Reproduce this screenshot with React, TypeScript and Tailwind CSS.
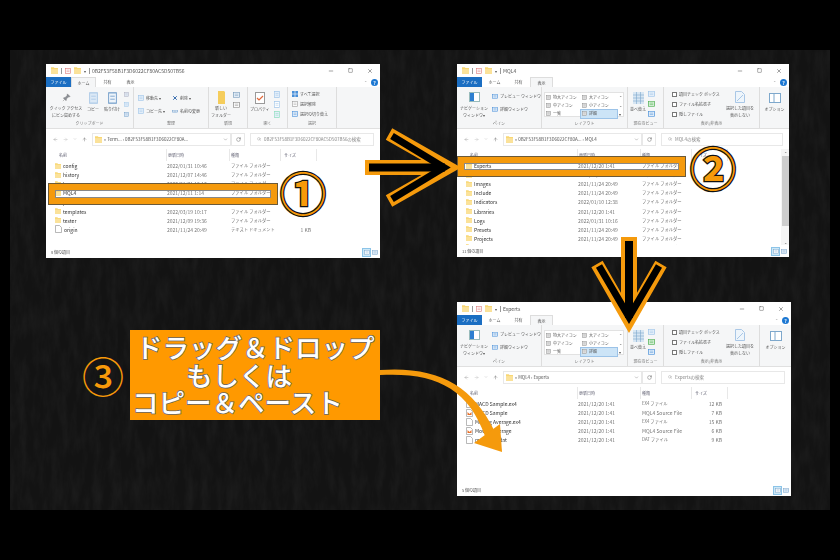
import React from "react";
import { Minus, Square, X, ArrowLeft, ArrowRight, ArrowUp, ChevronDown, RotateCw, Search } from "lucide-react";

const Folder = ({ s = 6 }: { s?: number }) => (
  <svg width={s} height={s} viewBox="0 0 10 10" className="shrink-0">
    <path d="M0 .5h4l1 1h5v8H0z" fill="#f8d775" />
    <path d="M0 3h10v6.500H0z" fill="#fbe29a" />
  </svg>
);
const Doc = ({ mq }: { mq?: boolean }) => (
  <svg width="7" height="8" viewBox="0 0 7 8" className="shrink-0">
    <path d="M.5.5h4l2 2v5h-6z" fill="#fff" stroke="#8a8a8a" strokeWidth=".6" />
    {mq && <path d="M1.500 3l2 2 2-2v3h-4z" fill="#e8702a" />}
  </svg>
);
const Box = ({ w = 7, h = 7, c = "#9cc3e8", f = "#e6f0fa" }: { w?: number; h?: number; c?: string; f?: string }) => (
  <svg width={w} height={h} viewBox="0 0 10 10" preserveAspectRatio="none" className="shrink-0">
    <rect x=".7" y=".7" width="8.6" height="8.6" fill={f} stroke={c} strokeWidth="1" />
    <path d="M2.500 3.500h5M2.500 6h5" stroke={c} strokeWidth=".8" />
  </svg>
);
const Chk = () => <span className="w-[5px] h-[5px] border-[0.5px] border-[#777] bg-white shrink-0" />;

const Big = ({ children, a, b, w }: { children: React.ReactNode; a: string; b?: string; w: string }) => (
  <div className={`flex flex-col items-center shrink-0 ${w}`}>
    <div className="h-[15px] flex items-center justify-center">{children}</div>
    <span className="leading-[7px] mt-[1px] whitespace-nowrap">{a}</span>
    {b && <span className="leading-[7px] whitespace-nowrap">{b}</span>}
  </div>
);
const Group = ({ label, w, children }: { label: string; w: string; children: React.ReactNode }) => (
  <div className={`flex flex-col h-full border-r-[0.5px] border-[#dddddd] shrink-0 ${w}`}>
    <div className="flex-1 flex pt-[3px] min-h-0">{children}</div>
    <div className="h-[9px] leading-[9px] text-center text-[#777]">{label}</div>
  </div>
);
const Sm = ({ children, t }: { children?: React.ReactNode; t?: string }) => (
  <div className="flex items-center gap-[2px] h-[10px] whitespace-nowrap">{children}{t && <span>{t}</span>}</div>
);

const HomeRibbon = () => (
  <>
    <Group label="クリップボード" w="w-[88px]">
      <Big w="w-[40px]" a="クイック アクセス" b="にピン留めする">
        <svg width="9" height="9" viewBox="0 0 10 10"><path d="M6 1l3 3-2 .5-2 2 -.5 2-3-3 2-.5 2-2zM3 7L1 9" fill="#8b8f96" stroke="#777" strokeWidth=".5" /></svg>
      </Big>
      <Big w="w-[14px]" a="コピー"><Box w={9} h={12} c="#a9c7e6" f="#dce9f6" /></Big>
      <Big w="w-[24px]" a="貼り付け"><Box w={9} h={12} c="#6f9bc8" f="#eef4fa" /></Big>
      <div className="flex flex-col -mt-[1px]">
        <Sm><Box w={5} h={5} c="#aab" /></Sm>
        <Sm><Box w={5} h={5} /></Sm>
        <Sm><Box w={5} h={5} c="#6f9bc8" /></Sm>
      </div>
    </Group>
    <Group label="整理" w="w-[75px]">
      <div className="grid grid-cols-[34px_1fr] pl-[4px] pt-[3px] auto-rows-[13px]">
        <Sm t="移動先 ▾"><Box w={6} h={6} /></Sm>
        <Sm t="削除 ▾"><X size={6} color="#3b6fb0" strokeWidth={4} /></Sm>
        <Sm t="コピー先 ▾"><Box w={6} h={6} /></Sm>
        <Sm t="名前の変更"><Box w={6} h={3} c="#6f9bc8" /></Sm>
      </div>
    </Group>
    <Group label="新規" w="w-[39px]">
      <Big w="w-[24px]" a="新しい" b="フォルダー">
        <svg width="7" height="13" viewBox="0 0 7 13"><path d="M0 0h6l1 1v12H0z" fill="#f5cd5c" /></svg>
      </Big>
      <div className="flex flex-col">
        <Sm><Box w={7} h={6} c="#7a9cbc" /></Sm>
        <Sm><Box w={7} h={6} c="#8a8a8a" f="#fff" /></Sm>
      </div>
    </Group>
    <Group label="開く" w="w-[40px]">
      <Big w="w-[24px]" a="プロパティ">
        <svg width="10" height="12" viewBox="0 0 10 12"><rect x=".5" y=".5" width="9" height="11" fill="#fff" stroke="#9a9a9a" /><path d="M2 6l2 2 4-4" fill="none" stroke="#e2683a" strokeWidth="1.2" /></svg>
      </Big>
      <div className="flex flex-col -mt-[1px] pl-[2px]">
        <Sm><Box w={6} h={7} /></Sm>
        <Sm><Box w={6} h={7} c="#9cc3e8" f="#fff" /></Sm>
        <Sm><Box w={6} h={7} c="#8db" /></Sm>
      </div>
    </Group>
    <Group label="選択" w="w-[49px]">
      <div className="flex flex-col pl-[4px] -mt-[1px]">
        <Sm t="すべて選択">
          <svg width="6" height="6" viewBox="0 0 6 6"><path d="M0 0h6v6H0z" fill="#4a90d9" /><path d="M3 0v6M0 3h6" stroke="#fff" strokeWidth=".6" /></svg>
        </Sm>
        <Sm t="選択解除"><Box w={6} h={6} c="#999" f="#fff" /></Sm>
        <Sm t="選択の切り替え"><Box w={6} h={6} c="#4a90d9" /></Sm>
      </div>
    </Group>
  </>
);

const Cell = ({ t, sel }: { t: string; sel?: boolean }) => (
  <div className={`flex items-center gap-[2px] h-[8.300px] whitespace-nowrap pl-[1px] ${sel ? "bg-[#cce4f7] outline-[0.5px] outline-[#9cc3e8]" : ""}`}>
    <Box w={5} h={5} c="#8a8a8a" f="#eee" />
    <span>{t}</span>
  </div>
);

const ViewRibbon = () => (
  <>
    <Group label="ペイン" w="w-[85px]">
      <Big w="w-[34px]" a="ナビゲーション" b="ウィンドウ▾">
        <svg width="11" height="10" viewBox="0 0 11 10"><rect x=".5" y=".5" width="10" height="9" fill="#fff" stroke="#9bb" /><rect x="1" y="1" width="4" height="8" fill="#2e7fd0" /></svg>
      </Big>
      <div className="flex flex-col gap-[3px] pt-[1px] pl-[1px]">
        <Sm t="プレビュー ウィンドウ"><Box w={6} h={5} c="#4a90d9" /></Sm>
        <Sm t="詳細ウィンドウ"><Box w={6} h={5} c="#4a90d9" /></Sm>
      </div>
    </Group>
    <Group label="レイアウト" w="w-[86px]">
      <div className="w-[80px] h-[25px] mt-[2px] ml-[2px] bg-white border-[0.5px] border-[#e2e2e2] grid grid-cols-[36px_36px_1fr] relative">
        <Cell t="特大アイコン" />
        <Cell t="大アイコン" />
        <span className="text-center leading-[8px]">⌃</span>
        <Cell t="中アイコン" />
        <Cell t="小アイコン" />
        <span className="text-center leading-[8px]">⌄</span>
        <Cell t="一覧" />
        <Cell t="詳細" sel />
        <span className="text-center leading-[8px]">▾</span>
      </div>
    </Group>
    <Group label="現在のビュー" w="w-[36px]">
      <Big w="w-[20px]" a="並べ替え">
        <svg width="11" height="12" viewBox="0 0 11 12"><rect width="11" height="12" fill="#d7e6f3" /><path d="M0 3h11M0 6h11M0 9h11M3.500 0v12M7.500 0v12" stroke="#7ea8cc" strokeWidth=".6" /></svg>
      </Big>
      <div className="flex flex-col -mt-[1px]">
        <Sm><Box w={7} h={6} /></Sm>
        <Sm><Box w={7} h={6} c="#4caf50" f="#d8f0d8" /></Sm>
        <Sm><Box w={7} h={6} c="#4a90d9" /></Sm>
      </div>
    </Group>
    <Group label="表示/非表示" w="w-[96px]">
      <div className="flex flex-col pl-[8px] -mt-[1px] w-[60px]">
        <Sm t="項目チェック ボックス"><Chk /></Sm>
        <Sm t="ファイル名拡張子"><Chk /></Sm>
        <Sm t="隠しファイル"><Chk /></Sm>
      </div>
      <Big w="w-[32px]" a="選択した項目を" b="表示しない">
        <svg width="10" height="12" viewBox="0 0 10 12"><path d="M.5.5h6l3 3v8h-9z" fill="#eef5fb" stroke="#a9c7e6" /><path d="M2 10l6-6" stroke="#a9c7e6" /></svg>
      </Big>
    </Group>
    <div className="flex-1 flex justify-center pt-[3px]">
      <Big w="w-[26px]" a="オプション">
        <svg width="12" height="10" viewBox="0 0 12 10"><rect x=".5" y=".5" width="11" height="9" fill="#fff" stroke="#7ea8cc" /><path d="M5 1v8" stroke="#7ea8cc" /></svg>
      </Big>
    </div>
  </>
);

type Row = { n: string; d: string; t: string; s?: string; i?: "folder" | "doc" | "mq" };

const Win = ({
  pos, title, active, ribbon, crumbs, search, rows, status, scroll,
}: {
  pos: string; title: string; active: number; ribbon: React.ReactNode; crumbs: string; search: string; rows: Row[]; status: string; scroll?: boolean;
}) => (
  <div className={`absolute flex flex-col overflow-hidden bg-white text-[#555] text-[4px] blur-[0.5px] ${pos}`}>
    <div className="h-[13px] shrink-0 flex items-center pl-[5px] gap-[3px] text-[5px]">
      <Folder s={7} />
      <span className="w-[0.5px] h-[6px] bg-[#999]" />
      <Box w={6} h={6} c="#d77" f="#fff" />
      <Folder s={7} />
      <span className="text-[4px]">▾</span>
      <span className="w-[0.5px] h-[6px] bg-[#999]" />
      <span className="whitespace-nowrap">{title}</span>
      <div className="ml-auto flex items-center gap-[14px] pr-[7px] text-[#444]">
        <Minus size={6} /><Square size={5} /><X size={6} />
      </div>
    </div>
    <div className="h-[10px] shrink-0 flex items-stretch text-center leading-[10px]">
      <span className="w-[25px] bg-[#1b6ec2] text-white">ファイル</span>
      {["ホーム", "共有", "表示"].map((t, i) => (
        <span key={t} className={`${i === 0 ? "w-[25px]" : "w-[23px]"} ${active === i ? "bg-[#f5f6f7] border-x-[0.5px] border-t-[0.5px] border-[#ddd]" : ""}`}>{t}</span>
      ))}
      <span className="ml-auto mr-[2px] self-center flex items-center gap-[4px]">
        <span className="text-[#999]">⌃</span>
        <span className="w-[7px] h-[7px] rounded-full bg-[#1b77d2] text-white text-[5px] leading-[7px] font-bold">?</span>
      </span>
    </div>
    <div className="h-[42px] shrink-0 flex bg-[#f5f6f7] border-b-[0.5px] border-[#e0e0e0] leading-[7px]">{ribbon}</div>
    <div className="h-[20px] shrink-0 flex items-center gap-[5px] pl-[7px] pr-[6px] text-[4.500px]">
      <ArrowLeft size={5} color="#999" />
      <ArrowRight size={5} color="#bbb" />
      <ChevronDown size={4} color="#aaa" />
      <ArrowUp size={5} color="#666" />
      <div className="flex items-center shrink-0">
        <div className="w-[139px] h-[13px] flex items-center gap-[2px] border-[0.5px] border-[#e8e8e8] px-[2px] overflow-hidden">
          <Folder s={7} />
          <span className="whitespace-nowrap flex-1">{crumbs}</span>
          <ChevronDown size={5} color="#777" />
        </div>
        <div className="w-[14px] h-[13px] flex items-center justify-center border-[0.5px] border-[#e8e8e8]"><RotateCw size={5} /></div>
      </div>
      <div className="flex-1 min-w-0 h-[13px] flex items-center gap-[3px] border-[0.5px] border-[#e8e8e8] pl-[6px] text-[#888] whitespace-nowrap overflow-hidden">
        <Search size={4} className="shrink-0" />{search}
      </div>
    </div>
    <div className="flex-1 min-h-0 relative overflow-hidden">
      <div className="h-[12px] grid grid-cols-[121px_63px_51px_36px] items-center text-[#667]">
        <span className="pl-[13px] border-r-[0.5px] border-[#e8e8e8] h-full leading-[12px]">名前</span>
        <span className="pl-[1px] border-r-[0.5px] border-[#e8e8e8] h-full leading-[12px]">更新日時</span>
        <span className="pl-[1px] border-r-[0.5px] border-[#e8e8e8] h-full leading-[12px]">種類</span>
        <span className="border-r-[0.5px] border-[#e8e8e8] h-full leading-[12px] pl-[3px]">サイズ</span>
      </div>
      {rows.map((r) => (
        <div key={r.n} className="h-[9.100px] grid grid-cols-[121px_63px_51px_36px] items-center leading-[9px] whitespace-nowrap">
          <div className="pl-[9px] flex items-center gap-[2px] text-[#333] text-[5px]">
            {r.i === "doc" ? <Doc /> : r.i === "mq" ? <Doc mq /> : <Folder />}
            <span>{r.n}</span>
          </div>
          <span className="text-[#777] text-[5px]">{r.d}</span>
          <span className={`text-[#777] pl-[1px] ${r.t.startsWith("MQL4") ? "text-[5px]" : "text-[4.300px]"}`}>{r.t}</span>
          <span className="text-right text-[#777] pr-[6px] text-[5px]">{r.s}</span>
        </div>
      ))}
      {scroll && (
        <div className="absolute right-0 top-0 bottom-0 w-[8px] bg-[#f5f5f5] flex flex-col items-center">
          <span className="leading-[6px] mt-[1px]">⌃</span>
          <div className="w-[7px] h-[70px] bg-[#cdcdcd]" />
          <span className="leading-[6px] mt-auto">⌄</span>
        </div>
      )}
    </div>
    <div className="h-[12px] shrink-0 flex items-center pl-[5px]">
      <span>{status}</span>
      <div className="ml-auto mr-[2px] flex items-center gap-[1px]">
        <span className="w-[9px] h-[9px] bg-[#cce8f7] border-[0.5px] border-[#8cc4e8] flex items-center justify-center"><Box w={6} h={5} c="#7ea8cc" f="#fff" /></span>
        <Box w={6} h={5} c="#7ea8cc" />
      </div>
    </div>
  </div>
);

const ff = "ファイル フォルダー";
const rows1: Row[] = [
  { n: "config", d: "2022/01/31 10:46", t: ff },
  { n: "history", d: "2021/12/07 14:46", t: ff },
  { n: "logs", d: "2022/01/31 10:16", t: ff },
  { n: "MQL4", d: "2021/12/11 1:14", t: ff },
  { n: "profiles", d: "2022/01/31 10:17", t: ff },
  { n: "templates", d: "2022/03/19 10:17", t: ff },
  { n: "tester", d: "2021/12/09 19:36", t: ff },
  { n: "origin", d: "2021/11/24 20:49", t: "テキスト ドキュメント", s: "1 KB", i: "doc" },
];
const rows2: Row[] = [
  { n: "Experts", d: "2021/12/20 1:41", t: ff },
  { n: "Files", d: "2021/11/24 20:49", t: ff },
  { n: "Images", d: "2021/11/24 20:49", t: ff },
  { n: "Include", d: "2021/11/24 20:49", t: ff },
  { n: "Indicators", d: "2022/01/10 12:38", t: ff },
  { n: "Libraries", d: "2021/12/20 1:41", t: ff },
  { n: "Logs", d: "2022/01/31 10:16", t: ff },
  { n: "Presets", d: "2021/11/24 20:49", t: ff },
  { n: "Projects", d: "2021/11/24 20:49", t: ff },
  { n: "Scripts", d: "2021/11/24 20:49", t: ff },
];
const rows3: Row[] = [
  { n: "MACD Sample.ex4", d: "2021/12/20 1:41", t: "EX4 ファイル", s: "12 KB", i: "doc" },
  { n: "MACD Sample", d: "2021/12/20 1:41", t: "MQL4 Source File", s: "7 KB", i: "mq" },
  { n: "Moving Average.ex4", d: "2021/12/20 1:41", t: "EX4 ファイル", s: "15 KB", i: "doc" },
  { n: "Moving Average", d: "2021/12/20 1:41", t: "MQL4 Source File", s: "6 KB", i: "mq" },
  { n: "mqlcache.dat", d: "2021/12/20 1:41", t: "DAT ファイル", s: "9 KB", i: "doc" },
];

const Highlight = ({ pos }: { pos: string }) => (
  <div className={`absolute border-[6px] border-[#f59a0c] outline-[0.5px] outline-[#6b5a3a] ${pos}`}>
    <div className="w-full h-full border-[0.5px] border-[#888] blur-[0.3px]" />
  </div>
);

const Num = ({ pos, t }: { pos: string; t: string }) => (
  <span className={`absolute text-[#f79a0a] font-bold text-[46px] leading-[50px] w-[50px] h-[50px] text-center [-webkit-text-stroke:2.500px_#111] [paint-order:stroke_fill] ${pos}`}>{t}</span>
);

const Art = () => (
  <svg className="absolute left-0 top-0 pointer-events-none" width="840" height="560" viewBox="0 0 840 560" fill="none">
    <g strokeLinejoin="miter" strokeLinecap="butt">
      <path d="M365 167.500H445" stroke="#f59a0c" strokeWidth="15" />
      <path d="M389 134L448 167.500L389 201" stroke="#f59a0c" strokeWidth="13" />
      <path d="M369 167.500H445" stroke="#000" strokeWidth="8" />
      <path d="M392 136L444 167.500L392 199" stroke="#000" strokeWidth="7" />
      <path d="M629 237V318" stroke="#f59a0c" strokeWidth="16" />
      <path d="M597 264L629 320L661 264" stroke="#f59a0c" strokeWidth="13" />
      <path d="M629 241V318" stroke="#000" strokeWidth="8" />
      <path d="M599 266L629 317L659 266" stroke="#000" strokeWidth="7" />
    </g>
    <path d="M380 370C437 366 472 385 494 430L485 436C468 388 435 372 380 375Z" fill="#f59a0c" />
    <path d="M502 452L474 443L500 424Z" fill="#f59a0c" />
  </svg>
);

export default function App() {
  return (
    <div className="relative w-[840px] h-[560px] bg-black overflow-hidden flex items-center justify-center [font-family:'Noto_Sans_CJK_JP','Noto_Sans',sans-serif]">
      <div className="w-[820px] h-[460px] bg-[#131313] overflow-hidden">
        <svg width="820" height="460" className="block opacity-15">
          <filter id="chalk">
            <feTurbulence type="fractalNoise" baseFrequency="0.12 0.035" numOctaves="4" seed="4" />
            <feColorMatrix values="0 0 0 0 .25  0 0 0 0 .25  0 0 0 0 .25  0 0 0 .9 -.3" />
          </filter>
          <rect width="820" height="460" filter="url(#chalk)" />
        </svg>
      </div>

      <Win
        pos="left-[46px] top-[64px] w-[334px] h-[194px]"
        title="0B2F53F58B1F3D6022CF80AC5D507B56"
        active={0}
        ribbon={<HomeRibbon />}
        crumbs="« Term... › 0B2F53F58B1F3D6022CF80A..."
        search="0B2F53F58B1F3D6022CF80AC5D507B56の検索"
        rows={rows1}
        status="8 個の項目"
      />
      <Win
        pos="left-[457px] top-[64px] w-[332px] h-[193px]"
        title="MQL4"
        active={2}
        ribbon={<ViewRibbon />}
        crumbs="« 0B2F53F58B1F3D6022CF80A... › MQL4"
        search="MQL4の検索"
        rows={rows2}
        status="11 個の項目"
        scroll
      />
      <Win
        pos="left-[457px] top-[302px] w-[334px] h-[194px]"
        title="Experts"
        active={2}
        ribbon={<ViewRibbon />}
        crumbs="« MQL4 › Experts"
        search="Expertsの検索"
        rows={rows3}
        status="5 個の項目"
      />

      <Highlight pos="left-[49px] top-[184px] w-[228px] h-[20px]" />
      <Highlight pos="left-[458px] top-[157px] w-[227px] h-[19px]" />
      <Num pos="left-[278px] top-[166px]" t="①" />
      <Num pos="left-[688px] top-[141px]" t="②" />

      <div className="absolute left-[130px] top-[330px] w-[250px] h-[90px] bg-[#ff9900] text-white font-medium text-[26.500px] leading-[27.500px] pt-[3px] whitespace-nowrap [-webkit-text-stroke:1.500px_#666] [paint-order:stroke_fill] flex flex-col">
        <span className="pl-[6px]">ドラッグ＆ドロップ</span>
        <span className="pl-[56px]">もしくは</span>
        <span className="pl-[2px]">コピー＆ペースト</span>
      </div>
      <span className="absolute left-[78px] top-[350px] w-[50px] h-[50px] text-center text-[#f79a0a] font-medium text-[42px] leading-[50px]">③</span>

      <Art />
    </div>
  );
}
